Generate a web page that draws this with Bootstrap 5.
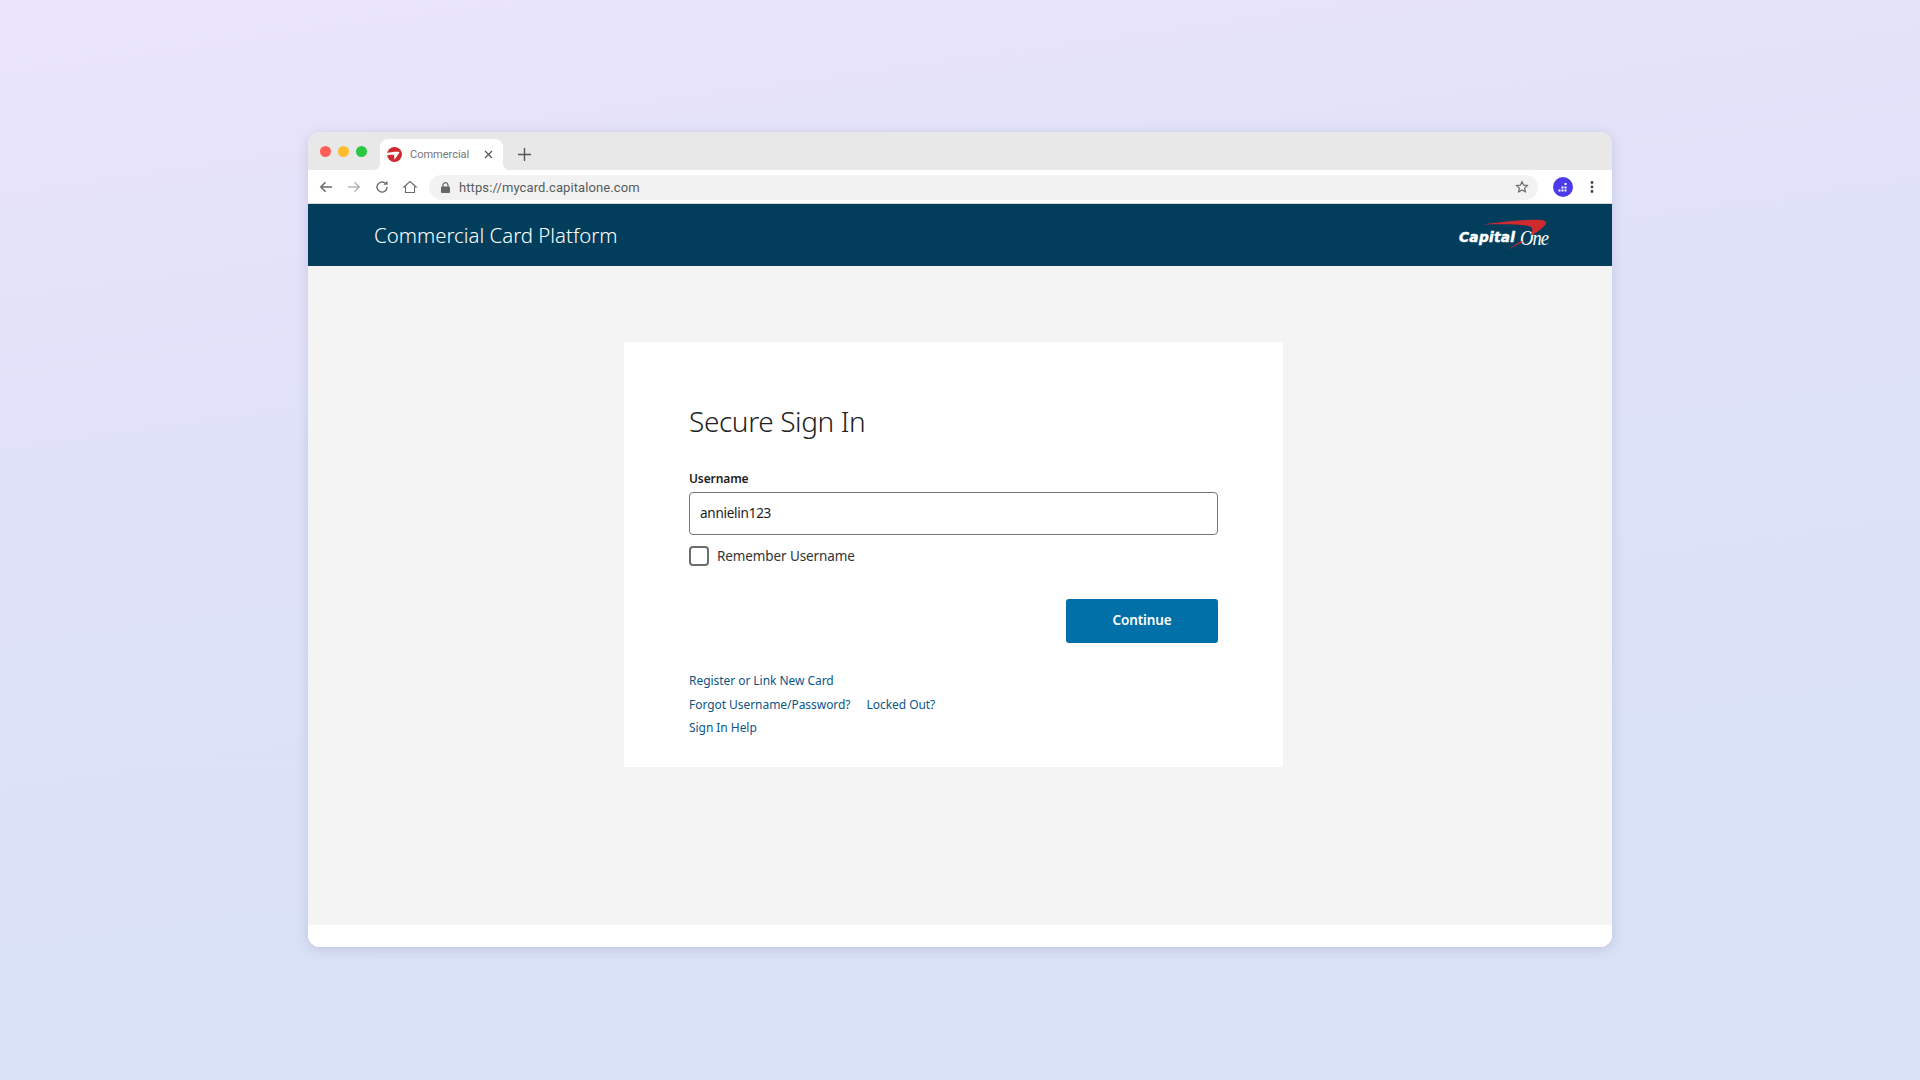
<!DOCTYPE html>
<html lang="en">
<head>
<meta charset="utf-8">
<title>Commercial Card Platform</title>
<link rel="stylesheet" href="https://cdn.jsdelivr.net/npm/bootstrap@5.3.0/dist/css/bootstrap.min.css">
<style>
html,body{height:100%;}
body{margin:0;height:1080px;overflow:hidden;background:linear-gradient(172deg,#ebe5fb 0%,#e2e2f9 25%,#d9e1f6 75%,#d9e1f6 100%);font-family:"Noto Sans","Open Sans",sans-serif;padding:132px 308px 133px;}
.appwin{width:1304px;height:815px;border-radius:12px;overflow:hidden;background:#fff;box-shadow:0 2px 12px rgba(70,80,140,.18);}
.tabstrip{height:38px;background:#e8e8e8;padding-left:12px;}
.lights{gap:7px;}
.lightdot{width:11px;height:11px;border-radius:50%;}
.browsertab{position:relative;width:123px;height:31px;margin-left:13px;background:#fff;border-radius:8px 8px 0 0;align-self:flex-end;padding-left:7px;}
.browsertab::before,.browsertab::after{content:"";position:absolute;bottom:0;width:6px;height:6px;}
.browsertab::before{left:-6px;background:radial-gradient(circle at 0 0,transparent 5.5px,#fff 6px);}
.browsertab::after{right:-6px;background:radial-gradient(circle at 100% 0,transparent 5.5px,#fff 6px);}
.tabtitle{font-family:Roboto,sans-serif;font-size:11px;color:#757575;margin-left:8px;width:74px;padding-top:1px;}
.plusicon{margin-left:15px;margin-top:6px;}
.toolbar{height:34px;background:#fff;padding:1px 0 0 10px;border-bottom:1px solid #d8d8d8;gap:12px;}
.navicon{width:16px;height:16px;display:block;flex:none;}
.urlbar{width:1109px;height:25px;margin-left:-1px;background:#f2f2f2;border-radius:13px;padding:0 9px 0 12px;flex:none;}
.urltext{font-family:Roboto,sans-serif;font-size:13px;line-height:15px;color:#5a5a5a;margin-left:9px;padding-top:1px;letter-spacing:.1px;}
.avatar{margin-left:3px;flex:none;}
.kebab{margin-left:-1px;}
.brandbar{height:62px;background:#023e5c;padding:0 62px 0 66px;}
.brandtitle{font-family:"Noto Sans",sans-serif;font-weight:300;font-size:20.4px;color:#fff;margin:0;}
.logobox{position:relative;width:94px;height:32px;}
.logoswoosh{position:absolute;left:0;top:0;}
.logoword{position:absolute;left:3px;top:10px;font-family:"DejaVu Sans",sans-serif;font-weight:700;font-style:italic;font-size:13.700px;line-height:17px;color:#fff;letter-spacing:.3px;-webkit-text-stroke:.5px #fff;}
.logoone{position:absolute;left:64px;top:8px;font-family:"Liberation Serif",serif;font-style:italic;font-size:21px;line-height:22px;color:#fff;letter-spacing:-1px;transform:scaleX(.88);transform-origin:left center;}
.pagearea{height:659px;background:#f4f4f4;padding-top:76px;padding-left:316px;}
.signcard{width:659px;height:425px;background:#fff;padding:0 65px;}
.signhead{font-family:"Noto Sans",sans-serif;font-weight:300;font-size:28px;line-height:36px;color:#222;margin:0;padding-top:61px;letter-spacing:-.4px;}
.unamelabel{font-family:"Noto Sans",sans-serif;font-weight:600;font-size:12px;line-height:18px;color:#1b1b1b;margin:31px 0 4px;display:block;letter-spacing:-.1px;}
.unameinput{height:43px;border:1px solid #767676;border-radius:4px;font-size:13.500px;color:#1b1b1b;padding:0 10px 2px;font-family:"Noto Sans",sans-serif;letter-spacing:-.25px;}
.rememberrow{margin-top:11px;gap:8px;}
.rememberbox{width:20px;height:20px;margin:0;border:2px solid #6e6e6e;border-radius:3px;float:none;}
.rememberlabel{font-size:13.500px;line-height:20px;color:#333;letter-spacing:-.1px;}
.continuebtn{width:152px;height:44px;background:#016fa8;border:0;border-radius:3px;color:#fff;font-weight:600;font-size:13.500px;padding:0 0 2px;font-family:"Noto Sans",sans-serif;letter-spacing:-.1px;}
.btnrow{margin-top:33px;}
.linkrows{margin-top:26px;font-size:12px;letter-spacing:-.05px;}
.linkrow{height:23.500px;line-height:23.500px;gap:16px;}
.linkrow a{color:#0b5688;text-decoration:none;}
</style>
</head>
<body>
<div class="appwin d-flex flex-column">
  <div class="tabstrip d-flex align-items-center">
    <div class="lights d-flex">
      <span class="lightdot" style="background:#ff5f57"></span>
      <span class="lightdot" style="background:#ffbd2e"></span>
      <span class="lightdot" style="background:#28c940"></span>
    </div>
    <div class="browsertab d-flex align-items-center">
      <svg width="15" height="15" viewBox="0 0 16 16"><circle cx="8" cy="8" r="8" fill="#cf2a2f"/><path d="M0 6.500C4 5.500 10 4.500 13.500 5.500L8 13.500 7.500 8.500C5 8 2 8 .2 9z" fill="#fff"/></svg>
      <span class="tabtitle">Commercial</span>
      <svg width="9" height="9" viewBox="0 0 9 9"><path d="M1 1l7 7M8 1l-7 7" stroke="#555" stroke-width="1.200"/></svg>
    </div>
    <svg class="plusicon" width="13" height="13" viewBox="0 0 13 13"><path d="M6.500 0v13M0 6.500h13" stroke="#555" stroke-width="1.400"/></svg>
  </div>
  <div class="toolbar d-flex align-items-center">
    <svg class="navicon" viewBox="0 0 16 16"><path d="M14 8H3M7.500 3.200 2.800 8l4.700 4.800" fill="none" stroke="#6a6a6a" stroke-width="1.500"/></svg>
    <svg class="navicon" viewBox="0 0 16 16"><path d="M2 8h11M8.500 3.200 13.200 8l-4.700 4.800" fill="none" stroke="#b5b5b5" stroke-width="1.500"/></svg>
    <svg class="navicon" viewBox="0 0 16 16"><path d="M13 8a5 5 0 1 1-1.500-3.500" fill="none" stroke="#6a6a6a" stroke-width="1.400"/><path d="M13.500 1.800v4h-4z" fill="#6a6a6a"/></svg>
    <svg class="navicon" viewBox="0 0 16 16"><path d="M3.500 13.500V8H1.800L8 2.500 14.200 8h-1.700v5.500z" fill="none" stroke="#6a6a6a" stroke-width="1.100"/></svg>
    <div class="urlbar d-flex align-items-center">
      <svg width="9" height="11" viewBox="0 0 9 11"><path d="M2 5V3.200a2.500 2.500 0 0 1 5 0V5" fill="none" stroke="#666" stroke-width="1.200"/><rect y="4.500" width="9" height="6.500" rx="1" fill="#666"/></svg>
      <span class="urltext">https://mycard.capitalone.com</span>
      <svg class="ms-auto" width="14" height="14" viewBox="0 0 24 24"><path d="M12 2.800l2.800 6 6.500.7-4.800 4.400 1.300 6.400L12 17l-5.800 3.300 1.300-6.400-4.800-4.400 6.500-.7z" fill="none" stroke="#6a6a6a" stroke-width="2"/></svg>
    </div>
    <svg class="avatar" width="20" height="20" viewBox="0 0 20 20"><circle cx="10" cy="10" r="10" fill="#4b3be8"/><g fill="#fff"><rect x="5.500" y="12.500" width="2" height="2"/><rect x="8.500" y="12.500" width="2" height="2"/><rect x="11.500" y="12.500" width="2" height="2"/><rect x="8.500" y="9.500" width="2" height="2"/><rect x="11.500" y="9.500" width="2" height="2"/><rect x="11.500" y="6" width="2" height="2"/></g></svg>
    <svg class="navicon kebab" viewBox="0 0 16 16"><g fill="#444"><circle cx="8" cy="3.500" r="1.400"/><circle cx="8" cy="8" r="1.400"/><circle cx="8" cy="12.500" r="1.400"/></g></svg>
  </div>
  <div class="brandbar d-flex align-items-center justify-content-between">
    <h1 class="brandtitle">Commercial Card Platform</h1>
    <div class="logobox">
      <span class="logoword">Capital</span>
      <span class="logoone">One</span>
      <svg class="logoswoosh" width="94" height="32" viewBox="0 0 94 32"><path d="M27 5.500C45 3 70 0 86 1c4 .5 5 3 3 5-3 4-8 7-13 10-1 .5-1.500 0-1-1 2-3 2-6-1-7.500C65 5 45 5 27 5.500z" fill="#cf2a2f"/><path d="M51 31 65 22l2 1z" fill="#cf2a2f"/></svg>
    </div>
  </div>
  <div class="pagearea">
    <div class="signcard">
      <h2 class="signhead">Secure Sign In</h2>
      <label class="unamelabel" for="uname">Username</label>
      <input id="uname" class="form-control unameinput" type="text" value="annielin123">
      <div class="rememberrow d-flex align-items-center">
        <input id="remember" class="form-check-input rememberbox" type="checkbox">
        <label class="rememberlabel" for="remember">Remember Username</label>
      </div>
      <div class="btnrow d-flex justify-content-end">
        <button class="btn continuebtn" type="button">Continue</button>
      </div>
      <div class="linkrows">
        <div class="linkrow d-flex"><a href="#">Register or Link New Card</a></div>
        <div class="linkrow d-flex"><a href="#">Forgot Username/Password?</a><a href="#">Locked Out?</a></div>
        <div class="linkrow d-flex"><a href="#">Sign In Help</a></div>
      </div>
    </div>
  </div>
  <div class="flex-grow-1 bg-white"></div>
</div>
<script src="https://cdn.jsdelivr.net/npm/bootstrap@5.3.0/dist/js/bootstrap.bundle.min.js"></script>
</body>
</html>
